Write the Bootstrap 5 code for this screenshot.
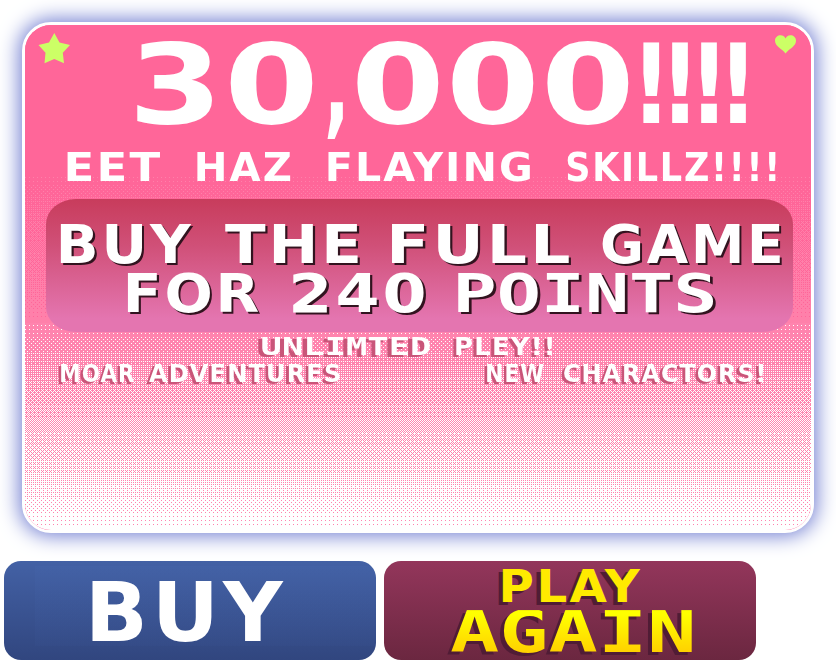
<!DOCTYPE html>
<html lang="en">
<head>
<meta charset="utf-8">
<meta name="viewport" content="width=device-width, initial-scale=1">
<title>30,000!!!!</title>
<link href="https://cdn.jsdelivr.net/npm/bootstrap@5.3.0/dist/css/bootstrap.min.css" rel="stylesheet">
<style>
body { background: #fff; font-family: "DejaVu Sans", sans-serif; overflow: hidden; }
.stage { width: 836px; height: 666px; padding: 22px 0 0 22px; }
.score-panel {
  width: 792px; height: 511px; border: 3px solid #fff; border-radius: 29px;
  background: #ff6699; box-shadow: 0 0 20px 3px #7480d2; color: #fff;
}
.dither { top: 0; left: 0; z-index: 0; border-radius: 26px; }
.panel-body { z-index: 1; }
.line { display: flex; justify-content: flex-start; white-space: nowrap; font-weight: 700; line-height: .729; }
.word { display: inline-block; flex: none; transform-origin: 0 0; letter-spacing: .05em; }
.mono { font-family: "DejaVu Sans Mono", monospace; letter-spacing: 0; }
.score { font-size: 110px; padding: 18px 0 0 112px; gap: 14px; height: 99px; }
.score .word { letter-spacing: .01em; }
.score .bangs { letter-spacing: -.13em; }
.tagline { font-size: 38.4px; padding-left: 42px; margin-top: 29px; gap: 37px; height: 28px; }
.offer {
  width: 747px; height: 133px; margin: 18px 0 0 21px; padding: 25px 0 0 14px;
  border-radius: 30px / 25px; background: linear-gradient(#c83c5c, #d05078 35%, #e475b0 90%);
}
.offer .line { font-size: 53.5px; gap: 33px; height: 39px; text-shadow: 2px 2px 0 #32131f; }
.offer .line + .line { margin-top: 10px; padding-left: 67px; gap: 34px; }
.perks .line { font-size: 25.4px; height: 18.5px; text-shadow: -3px 2px 0 #c95579; }
.perks .first { padding-left: 237px; margin-top: 5px; gap: 25px; }
.perks .second { padding-left: 36px; margin-top: 8px; gap: 147px; }
.perks .moar { gap: 14px; }
.perks .new { gap: 20px; }
.icon-star { left: 13px; top: 8px; }
.icon-heart { left: 750px; top: 10px; }
.actions { margin: 28px 0 0 -18.500px; gap: 8px; }
.actions .btn { width: 372px; height: 99px; border: 0; border-radius: 17px; padding: 0; text-align: left; }
.buy, .buy:hover {
  background: linear-gradient(rgba(75,110,185,.12), rgba(75,110,185,.05)) 31px 5px / 341px 80px no-repeat, linear-gradient(#4361a5, #31467f);
  color: #fff;
}
.buy .line { font-size: 82.3px; height: 60px; padding-left: 88px; }
.again, .again:hover { background: linear-gradient(#93365b, #6b2740); }
.again .line { text-shadow: -4px 3px 0 #501c35; }
.again .play { font-size: 43.9px; height: 32px; padding-left: 119px; color: #ffea00; }
.again .more { font-size: 59px; height: 43px; margin-top: 7px; padding-left: 66px; text-shadow: none; filter: drop-shadow(-4px 3px 0 #501c35); }
.again .more .word { background: linear-gradient(#ffff00 10%, #ffd000); -webkit-background-clip: text; background-clip: text; color: transparent; }
</style>
<script src="https://cdn.jsdelivr.net/npm/bootstrap@5.3.0/dist/js/bootstrap.bundle.min.js"></script>
</head>
<body>
<main class="stage">
  <section class="score-panel position-relative">
    <canvas class="dither position-absolute" width="786" height="505"></canvas>
    <svg class="icon-star position-absolute z-1" width="32" height="31" viewBox="0 0 32 31" aria-hidden="true"><path fill="#ccff66" d="M16.3 0 21.5 9.5 32 12 24.8 19.7 26 30.2 16.3 26 6.5 30.2 7.5 19.7.5 12 11 9.5Z"/></svg>
    <svg class="icon-heart position-absolute z-1" width="21" height="19" viewBox="0 0 21 19" aria-hidden="true"><path fill="#ccff66" d="M10.500 18.400C8 14.500 0 11.800 0 5.800 0-.5 8.500-1.500 10.500 3.500 12.500-1.500 21-.5 21 5.800c0 6-8 8.700-10.500 12.600Z"/></svg>
    <div class="panel-body position-relative">
      <div class="line score"><span class="word" data-w="176">30</span><span class="word" data-w="16">,</span><span class="word" data-w="272">000</span><span class="word bangs" data-w="103">!!!!</span></div>
      <div class="line tagline"><span class="word" data-w="93">EET</span><span class="word" data-w="94">HAZ</span><span class="word" data-w="202">FLAYING</span><span class="word" data-w="209">SKILLZ!!!!</span></div>
      <div class="offer">
        <div class="line"><span class="word" data-w="132">BUY</span><span class="word" data-w="133">THE</span><span class="word" data-w="178">FULL</span><span class="word" data-w="178">GAME</span></div>
        <div class="line"><span class="word" data-w="132">FOR</span><span class="word" data-w="131">240</span><span class="word mono" data-w="255">POINTS</span></div>
      </div>
      <div class="perks">
        <div class="line first"><span class="word mono" data-w="169">UNLIMTED</span><span class="word" data-w="97">PLEY!!</span></div>
        <div class="line second">
          <div class="d-flex moar"><span class="word" data-w="74">MOAR</span><span class="word" data-w="191">ADVENTURES</span></div>
          <div class="d-flex new"><span class="word" data-w="57">NEW</span><span class="word" data-w="200">CHARACTORS!</span></div>
        </div>
      </div>
    </div>
  </section>
  <div class="actions d-flex">
    <button type="button" class="btn buy d-flex align-items-center"><span class="line"><span class="word" data-w="192">BUY</span></span></button>
    <button type="button" class="btn again d-flex flex-column justify-content-center"><span class="line play"><span class="word" data-w="138">PLAY</span></span><span class="line more"><span class="word mono" data-w="243">AGAIN</span></span></button>
  </div>
</main>
<script>
// Stretch each word so that its inked width equals data-w.
const probe = document.createElement('canvas').getContext('2d');
document.querySelectorAll('.word').forEach(word => {
  const style = getComputedStyle(word);
  probe.font = `${style.fontWeight} ${style.fontSize} ${style.fontFamily}`;
  const m = probe.measureText(word.textContent);
  const spacing = (parseFloat(style.letterSpacing) || 0) * (word.textContent.length - 1);
  const ink = m.actualBoundingBoxLeft + m.actualBoundingBoxRight + spacing;
  const width = Number(word.dataset.w), scale = width / ink;
  const fontSize = parseFloat(style.fontSize);
  const natural = word.getBoundingClientRect().width;
  word.style.transform = `translate(${m.actualBoundingBoxLeft * scale}px, ${fontSize * .0185}px) scaleX(${scale})`;
  word.style.marginRight = `${width - natural}px`;
});

// Ordered dither: rose to light pink, then light pink to white.
const bayer = [0, 8, 2, 10, 12, 4, 14, 6, 3, 11, 1, 9, 15, 7, 13, 5];
const ctx = document.querySelector('.dither').getContext('2d');
for (let y = 0; y < 505; y++) {
  for (let x = 0; x < 786; x++) {
    const level = (bayer[(y % 4) * 4 + x % 4] + .5) / 16;
    if (y < 298) ctx.fillStyle = (y - 147) / 149 > level ? '#ff80aa' : '#ff6699';
    else ctx.fillStyle = (y - 292) / 215 > level ? '#ffffff' : '#ff84ae';
    ctx.fillRect(x, y, 1, 1);
  }
}
</script>
</body>
</html>
